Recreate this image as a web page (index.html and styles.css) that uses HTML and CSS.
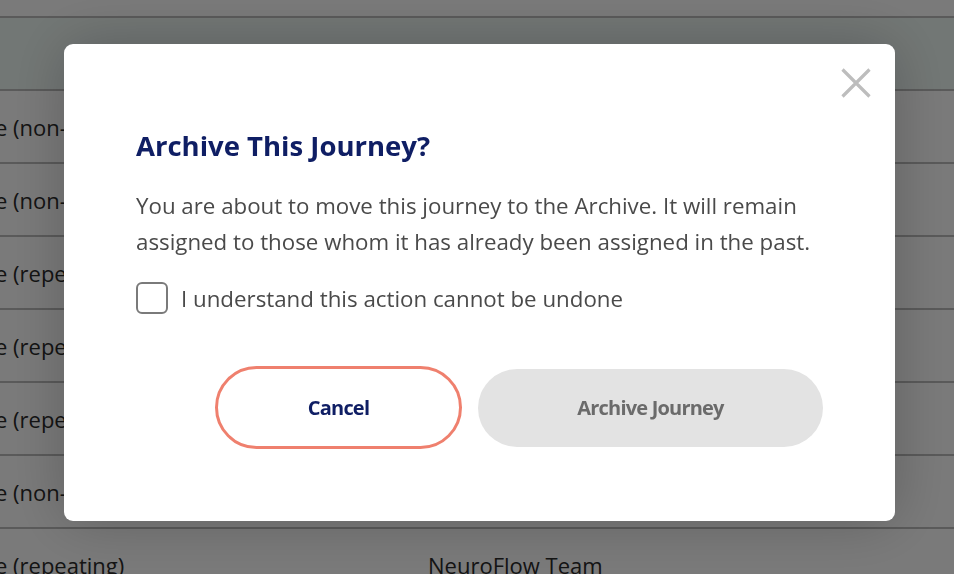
FILE: index.html
```html
<!DOCTYPE html>
<html lang="en">
<head>
<meta charset="utf-8">
<title>Journeys</title>
<link rel="stylesheet" href="styles.css">
</head>
<body>
<div class="page">
  <div class="table">
    <div class="topbar"></div>
    <div class="row head"></div>
    <div class="row"><span class="cell type">e (non-repeating)</span><span class="cell owner">NeuroFlow Team</span></div>
    <div class="row"><span class="cell type">e (non-repeating)</span><span class="cell owner">NeuroFlow Team</span></div>
    <div class="row"><span class="cell type">e (repeating)</span><span class="cell owner">NeuroFlow Team</span></div>
    <div class="row"><span class="cell type">e (repeating)</span><span class="cell owner">NeuroFlow Team</span></div>
    <div class="row"><span class="cell type">e (repeating)</span><span class="cell owner">NeuroFlow Team</span></div>
    <div class="row"><span class="cell type">e (non-repeating)</span><span class="cell owner">NeuroFlow Team</span></div>
    <div class="row"><span class="cell type">e (repeating)</span><span class="cell owner">NeuroFlow Team</span></div>
  </div>
</div>

<div class="overlay">
  <div class="modal" role="dialog" aria-labelledby="archive-title">
    <button class="close" aria-label="Close">
      <svg width="32" height="32" viewBox="0 0 32 32"><path d="M2.5 2.5 L29.5 29.5 M29.5 2.5 L2.5 29.5" stroke="#bdbdbd" stroke-width="3.2" fill="none"/></svg>
    </button>
    <h2 id="archive-title" class="title">Archive This Journey?</h2>
    <p class="text">You are about to move this journey to the Archive. It will remain assigned to those whom it has already been assigned in the past.</p>
    <label class="check">
      <span class="box"></span>
      <span>I understand this action cannot be undone</span>
    </label>
    <div class="actions">
      <button class="btn cancel">Cancel</button>
      <button class="btn archive" disabled>Archive Journey</button>
    </div>
  </div>
</div>
</body>
</html>
```

FILE: styles.css
```css
* { box-sizing: border-box; }

html, body {
  margin: 0;
  padding: 0;
  width: 954px;
  height: 574px;
  overflow: hidden;
  background: #fff;
  font-family: "Open Sans", "Lato", sans-serif;
}

/* table underneath the dialog */
.page { width: 954px; height: 574px; overflow: hidden; }

.table { margin-left: -5px; }

.topbar { height: 18px; background: #fff; border-bottom: 2px solid #bcbcbc; }

.row {
  height: 73px;
  display: flex;
  align-items: center;
  border-bottom: 2px solid #bcbcbc;
  font-size: 22px;
  color: #2b2b2b;
}

.row.head { background: #eff9f5; }

.cell.type { width: 433px; flex: none; white-space: nowrap; }
.cell.owner { white-space: nowrap; }

/* dimmed backdrop + dialog */
.overlay {
  position: fixed;
  inset: 0;
  background: rgba(0, 0, 0, 0.52);
  padding: 44px 0 0 64px;
}

.modal {
  position: relative;
  width: 831px;
  height: 477px;
  background: #fff;
  border-radius: 9px;
  padding: 84px 72px 0 72px;
  box-shadow: 0 0 60px rgba(0, 0, 0, 0.22);
}

.close {
  position: absolute;
  top: 23px;
  right: 23px;
  width: 32px;
  height: 32px;
  padding: 0;
  border: 0;
  background: none;
  display: flex;
}

.title {
  margin: 0;
  font-size: 27.5px;
  font-weight: 700;
  color: #0f1e64;
  line-height: 36px;
}

.text {
  margin: 24px 0 0;
  font-size: 22.3px;
  line-height: 36px;
  color: #4a4a4a;
}

.check {
  margin-top: 22px;
  display: flex;
  align-items: center;
  gap: 13px;
  font-size: 22.3px;
  color: #4a4a4a;
}

.box {
  width: 32px;
  height: 32px;
  border: 2.5px solid #7a7a7a;
  border-radius: 6px;
  flex: none;
}

.actions {
  margin-top: 52px;
  display: flex;
  justify-content: flex-end;
  align-items: center;
  gap: 16px;
}

.btn {
  font-family: inherit;
  font-size: 20px;
  letter-spacing: -0.8px;
  font-weight: 700;
  border-radius: 42px;
}

.cancel {
  width: 247px;
  height: 83px;
  background: #fff;
  border: 3px solid #ef806e;
  color: #0f1e64;
}

.archive {
  width: 345px;
  height: 78px;
  background: #e3e3e3;
  border: 0;
  color: #6b6b6b;
}
```
